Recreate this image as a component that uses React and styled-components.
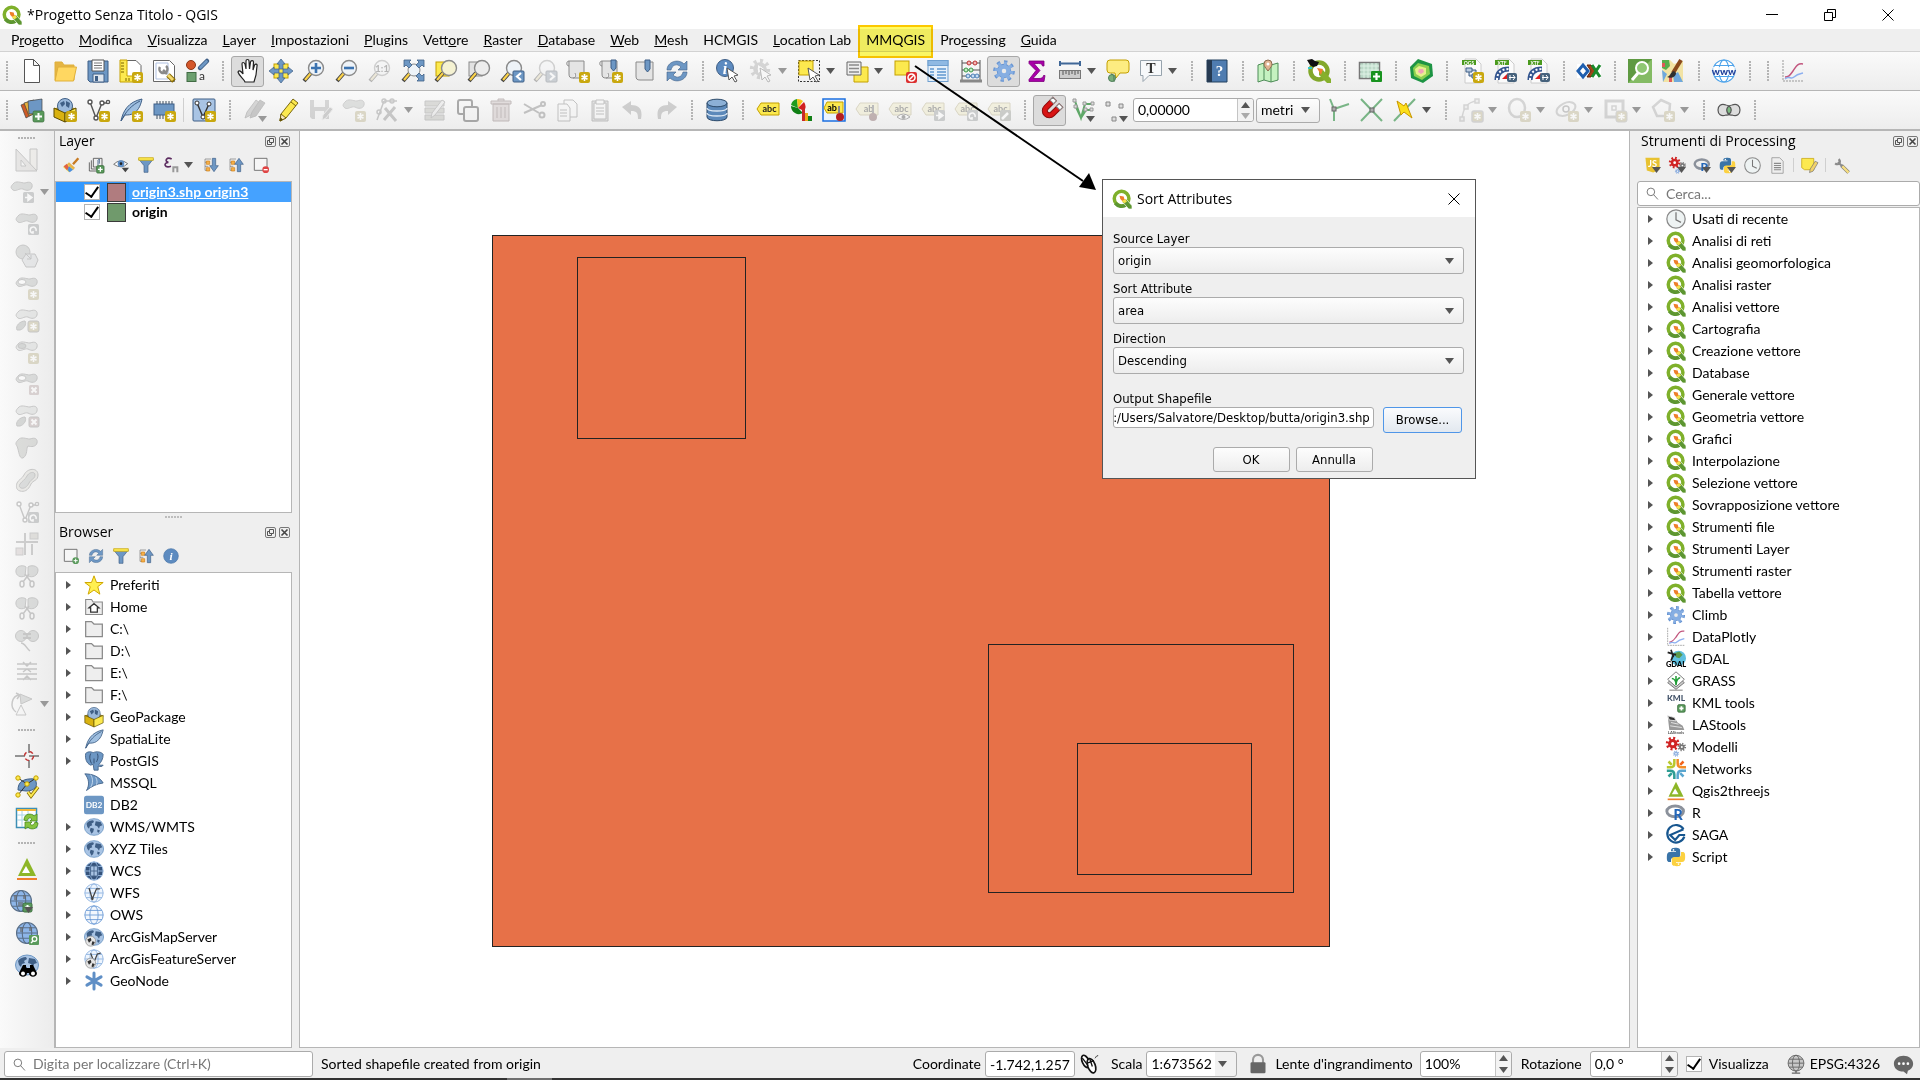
import React, { useEffect, useRef } from "react";
import styled, { createGlobalStyle, css } from "styled-components";

const uiFont = `Lato, "Noto Sans", sans-serif`;
const titleFont = `"Open Sans", "Noto Sans", sans-serif`;
const dialogFont = `"DejaVu Sans Condensed", "DejaVu Sans", sans-serif`;

const GlobalStyle = createGlobalStyle`
  * {
    box-sizing: border-box;
  }
  body {
    margin: 0;
    background: #efefef;
    color: #000;
    font: 14px/18px ${uiFont};
  }
  button, input, select {
    font: inherit;
    color: inherit;
  }
`;

/* ---------- icons (24 x 24 grid) ---------- */

const BLUE = "#6d97c4";
const NAVY = "#3f5f86";
const GREY = "#8a8a8a";
const YELLOW = "#fce94f";
const GOLD = "#c4a000";
const BLOB = "M3 4C6 0 11 3 15 3c5-2 8 0 7 4-1 4-6 4-9 2-4-1-7 3-10 1C0 8 1 6 3 4z";
const FEATHER = "M2 23C4 13 9 4 23 1c-1 5-3 11-8 14-3 2-6 2-9 2z";
const TAG = "M1 11l4-6h18v12H5z";

const Spark = () => (
  <g>
    <rect x="13" y="13" width="11" height="11" rx="2" fill="#c9a80f" />
    <path d="M18.500 15v7M15.500 16.700l6 3.600M21.500 16.700l-6 3.600" stroke="#fff" strokeWidth="1.600" />
  </g>
);
const Plus = ({ x = 13, y = 13, s = 11 }) => (
  <g>
    <rect x={x} y={y} width={s} height={s} rx="1.500" fill="#5a9a5c" stroke="#3c6f3e" />
    <path d={`M${x + s / 2} ${y + 2}v${s - 4}M${x + 2} ${y + s / 2}h${s - 4}`} stroke="#fff" strokeWidth="2" />
  </g>
);
const CrossBadge = () => (
  <g>
    <rect x="14" y="13" width="10" height="10" rx="1.500" fill="#d08a8a" />
    <path d="M16.500 15.500l5 5M21.500 15.500l-5 5" stroke="#fff" strokeWidth="2" />
  </g>
);
const ArrowBadge = () => (
  <g>
    <rect x="13" y="12" width="11" height="11" rx="1.500" fill="#7e8a90" />
    <path d="M15 17.500h5M18 14.500l4 3-4 3z" stroke="#fff" strokeWidth="1.500" fill="#fff" />
  </g>
);
const TurnBadge = () => (
  <g>
    <rect x="13" y="12" width="11" height="11" rx="1.500" fill="#7e8a90" />
    <path d="M21 19a3 3 0 1 0-3 2v-2" stroke="#fff" strokeWidth="1.600" fill="none" />
  </g>
);
const Lens = ({ fill = "#eef3f8", x = 14 }) => (
  <g>
    <path d="M9 14l-7 8" stroke="#444" strokeWidth="4" />
    <path d="M9 14l-6 7" stroke="#fcd34a" strokeWidth="2.200" />
    <circle cx={x} cy="9" r="7.500" fill={fill} stroke={GREY} strokeWidth="1.400" />
  </g>
);
const Cursor = ({ x = 11, y = 9 }) => (
  <path d={`M${x} ${y}l2 12 3-3 3 5 2-1-3-5 4-1z`} fill="#fff" stroke="#555" strokeWidth="1" />
);
const Gear = ({ cx = 12, cy = 12, r = 8, fill = "#7ba4dc", hole = "#eaeaea" }) => (
  <g>
    <circle cx={cx} cy={cy} r={r} fill="none" stroke={fill} strokeWidth={r * 0.55} strokeDasharray={`${r * 0.36} ${r * 0.42}`} />
    <circle cx={cx} cy={cy} r={r * 0.85} fill={fill} />
    <circle cx={cx} cy={cy} r={r * 0.3} fill={hole} />
  </g>
);
const Globe = ({ fill = "#a9c4e4", line = NAVY, r = 10.5, cx = 12, cy = 12 }) => (
  <g fill="none" stroke={line} strokeWidth="1.100">
    <circle cx={cx} cy={cy} r={r} fill={fill} />
    <ellipse cx={cx} cy={cy} rx={r * 0.45} ry={r} />
    <path d={`M${cx - r} ${cy}h${2 * r}M${cx - r * 0.87} ${cy - r / 2}h${r * 1.74}M${cx - r * 0.87} ${cy + r / 2}h${r * 1.74}`} />
  </g>
);
const Earth = () => (
  <g>
    <ellipse cx="12" cy="12" rx="11.500" ry="10" fill="#a9c4e4" stroke={BLUE} />
    <path d="M3 8c2-3 5-4 8-4l1 2-3 2 1 2-3 1-1 3-2-2zM8 13l4 1-1 4-2 2-2-4zM14 5l6 1 2 4-3 1-1 3-2-3-3-1zM16 15l3 1-1 3-2-1z" fill={NAVY} />
  </g>
);
const Vee = ({ color = "#555" }) => (
  <g fill="none" stroke={color} strokeWidth="1.400">
    <path d="M4 4l6 16 6-15h5" />
    <g fill="#fff">
      <circle cx="4" cy="4" r="2" />
      <circle cx="10" cy="20" r="2" />
      <circle cx="16" cy="5" r="2" />
      <circle cx="22" cy="4" r="1.600" />
    </g>
  </g>
);
const Scroll = () => <path d="M3 2h15v17H7c-3 0-4-1-4-4zM3 2c-3 0-3 5 0 5M7 19c3 0 3-3 2-5" fill="#e4e4e4" stroke={GREY} />;
const Label = ({ text = "abc" }) => (
  <g>
    <path d={TAG} fill={YELLOW} stroke={GOLD} />
    <text x="13.500" y="14" fontSize="9" fontWeight="700" textAnchor="middle" fill="#222">{text}</text>
  </g>
);
const Scissors = () => (
  <g fill="none" stroke="#777" strokeWidth="1.500">
    <path d="M10 10l6 8M14 10l-6 8" />
    <ellipse cx="7" cy="20" rx="2" ry="3" />
    <ellipse cx="17" cy="20" rx="2" ry="3" />
  </g>
);
const Doc = ({ tag, badge }) => (
  <g>
    <path d="M5 0h11l5 5v19H5z" fill="#fbfbfb" stroke="#ccc" />
    <rect x="2" y="1" width="14" height="5" fill="#4a9a1d" />
    <text x="9" y="5.500" fontSize="5" fontWeight="700" textAnchor="middle" fill="#fff">{tag}</text>
    {badge === "spark" ? (
      <g>
        <path d="M6 9h6v4H6zM12 15h6v4h-6zM9 13v4h3M12 11h4v4" fill="#b9cbe0" stroke={NAVY} />
        <Spark />
      </g>
    ) : (
      <g>
        <path d="M4 21c0-7 4-11 12-11" fill="none" stroke="#33558f" strokeWidth="5" />
        <path d="M4 21c0-7 4-11 12-11" fill="none" stroke="#fff" strokeWidth="2" strokeDasharray="2 2" />
        <path d="M9 20l6-6v6z" fill="#e02020" />
        <rect x="14" y="14" width="10" height="9" rx="2" fill="#46627c" />
        <path d="M16 18.500h6M20 16l2 2.500-2 2.500M17 16v5" stroke="#fff" fill="none" />
      </g>
    )}
  </g>
);

const ICONS = {
  qgis: (
    <g>
      <circle cx="11.500" cy="11.500" r="8.800" fill="#fff" stroke="#7fb02b" strokeWidth="4.200" />
      <path d="M4 17c3 4 9 5 13 2" stroke="#5d9631" strokeWidth="4.200" fill="none" />
      <path d="M13 13l4-1 7 8v4h-4l-7-8z" fill="#5d9631" stroke="#fff" strokeWidth=".8" />
      <path d="M12 12l4 0 2 3-3 2-3-2z" fill="#f5e04c" />
      <path d="M9 8l5 1 1 4-3 1-2-2z" fill="#ee7f2b" />
    </g>
  ),
  newFile: <path d="M4.500.5h9l6 6v17h-15zM13.500.5v6h6" fill="#fff" stroke="#555" />,
  open: (
    <g stroke="#e0b03a">
      <path d="M2 3h7l2 3h10v15H2z" fill="#e5b544" />
      <path d="M5 8h18.500l-3 14H2z" fill="#ffd761" />
    </g>
  ),
  save: (
    <g>
      <path d="M2 2h20v21H4l-2-2z" fill={BLUE} stroke={NAVY} />
      <path d="M6 1h12v11H6z" fill="#fff" stroke="#555" />
      <path d="M8 4h8M8 6.500h8M8 9h8" stroke="#777" />
      <path d="M7 15h11v8H7z" fill="#dfe6ee" stroke={NAVY} />
      <rect x="9" y="17" width="3" height="5" fill={NAVY} />
    </g>
  ),
  layout: (
    <g>
      <path d="M6 1.500h11l5 5v16H6z" fill="#fff" stroke="#666" />
      <path d="M1 1h7v16h12v6H1z" fill={YELLOW} stroke={GOLD} />
      <path d="M2 4h3M2 7h3M2 10h3M2 13h3M7 22v-3M10 22v-3" stroke="#7a6400" />
      <Spark />
    </g>
  ),
  layoutManager: (
    <g>
      <path d="M1.500 1.500h16l5 5v16h-21z" fill="#fff" stroke="#666" />
      <path d="M4 4h12v16H4z" fill="none" stroke="#aebfe0" />
      <path d="M16 16l6 6" stroke="#8a6d00" strokeWidth="5" />
      <path d="M16 16l5 5" stroke="#f3d86c" strokeWidth="3" />
      <path d="M15 15l-4-4M8 8a4 4 0 1 0 6-1" stroke={GREY} strokeWidth="2.500" fill="none" />
    </g>
  ),
  style: (
    <g>
      <circle cx="6" cy="6" r="4.500" fill="#d4572b" stroke="#8d3616" />
      <path d="M15 9l7-7" stroke={NAVY} strokeWidth="4.500" strokeLinecap="round" />
      <path d="M15.500 8.500l6-6" stroke={BLUE} strokeWidth="2.600" strokeLinecap="round" />
      <rect x="2" y="13.500" width="9" height="9" fill="#6b9f6e" stroke="#416b44" />
      <text x="14" y="21" fontSize="12" fill="#333">a</text>
    </g>
  ),
  hand: (
    <path d="M9 23c-1-3-6-6-7-10 1-2 3-1 5 2l-1-10c0-2 2-2 3 0l1 5V2c0-2 3-2 3 0l.5 8 1-7c.5-2 3-1.500 3 0l-.5 8 1.500-5c1-1.500 3-1 2.500 1l-1 9-2 7z" fill="#fff" stroke="#222" strokeWidth="1.200" />
  ),
  panSelection: (
    <g>
      <rect x="5" y="5" width="14" height="14" fill={YELLOW} stroke={GOLD} />
      <path d="M12 0l4 5h-2v5h-4V5H8zM12 24l4-5h-2v-5h-4v5H8zM0 12l5-4v2h5v4H5v2zM24 12l-5-4v2h-5v4h5v2z" fill={BLUE} stroke={NAVY} strokeWidth=".7" />
    </g>
  ),
  zoomIn: <g><Lens /><path d="M9 9h10M14 4v10" stroke="#3b73b0" strokeWidth="2.600" /></g>,
  zoomOut: <g><Lens /><path d="M9 9h10" stroke="#3b73b0" strokeWidth="2.600" /></g>,
  zoomNative: <g><Lens /><text x="14" y="13" fontSize="10" fontWeight="700" textAnchor="middle" fill="#444">1:1</text></g>,
  zoomFull: (
    <g>
      <path d="M9 14l-7 8" stroke="#444" strokeWidth="4" />
      <path d="M9 14l-6 7" stroke="#fcd34a" strokeWidth="2.200" />
      <circle cx="13" cy="11" r="6" fill="#eef3f8" stroke={GREY} />
      <path d="M3 1h7L8 3l3 3-3 3-3-3-2 2zM23 1h-7l2 2-3 3 3 3 3-3 2 2zM23 22h-7l2-2-3-3 3-3 3 3 2-2z" fill={BLUE} stroke={NAVY} strokeWidth=".8" />
    </g>
  ),
  zoomSelection: <g><rect x="2" y="3" width="13" height="14" fill={YELLOW} stroke={GOLD} /><Lens fill="#f5f2d2" x={15} /></g>,
  zoomLayer: <g><rect x="2" y="3" width="13" height="14" fill="#e2e2e2" stroke={GREY} /><Lens fill="#ececec" x={15} /></g>,
  zoomLast: <g><Lens /><rect x="13" y="12" width="11" height="11" rx="1" fill={BLUE} stroke={NAVY} /><path d="M21 14l-4 3.500 4 3.500" stroke="#fff" strokeWidth="2.200" fill="none" /></g>,
  zoomNext: <g><Lens /><rect x="13" y="12" width="11" height="11" rx="1" fill={BLUE} stroke={NAVY} /><path d="M17 14l4 3.500-4 3.500" stroke="#fff" strokeWidth="2.200" fill="none" /></g>,
  mapView: <g><Scroll /><Spark /></g>,
  bookmarkNew: <g><Scroll /><path d="M12 1h5v8l-2.500 3-2.500-3z" fill={BLUE} stroke={NAVY} /><Spark /></g>,
  bookmarks: <g><path d="M4 3h17v18H8c-3 0-4-1-4-4z" fill="#e4e4e4" stroke={GREY} /><path d="M13 1h5v9l-2.500 3-2.500-3z" fill={BLUE} stroke={NAVY} /></g>,
  refresh: (
    <g fill={BLUE} stroke={NAVY} strokeWidth=".6">
      <path d="M2 11C2 3 13-1 19 5l3-3v9h-9l3-3c-4-4-9-2-10 3z" />
      <path d="M22 13c0 8-11 12-17 6l-3 3v-9h9l-3 3c4 4 9 2 10-3z" />
    </g>
  ),
  identify: <g><circle cx="9" cy="9" r="8.500" fill="#5d8bc0" stroke={NAVY} /><text x="9" y="15" fontSize="16" fontStyle="italic" fontWeight="700" textAnchor="middle" fill="#fff" fontFamily="Liberation Serif">i</text><Cursor /></g>,
  action: <g><Gear cx={11} cy={10} r={8} fill="#999" /><path d="M9 6l6 4-6 4z" fill="#fff" /><Cursor /></g>,
  select: <g><rect x="1.500" y="1.500" width="21" height="21" fill="none" stroke="#333" strokeDasharray="2 1.500" /><rect x="2" y="2" width="14" height="14" fill={YELLOW} stroke={GOLD} /><Cursor /></g>,
  selectForm: <g><path d="M9 8h14v15H9z" fill={YELLOW} stroke={GOLD} /><path d="M2 3h14v13H2z" fill="#eee" stroke="#666" /><path d="M4 6h10M4 9.500h10M4 13h10" stroke={GREY} strokeWidth="1.500" /></g>,
  deselect: <g><rect x="2" y="2" width="14" height="14" fill={YELLOW} stroke={GOLD} /><rect x="13" y="13" width="11" height="11" rx="2" fill="#dc2f2f" /><circle cx="18.500" cy="18.500" r="3.500" fill="none" stroke="#fff" strokeWidth="1.500" /><path d="M16 21l5-5" stroke="#fff" strokeWidth="1.500" /></g>,
  table: <g><rect x="2" y="1.500" width="20" height="21" fill="#e6f0fa" stroke="#6f9fcf" /><rect x="2" y="1.500" width="20" height="5" fill="#8fb9e3" stroke="#6f9fcf" /><path d="M4 10h4M4 13h4M4 16h4M4 19h4M11 10h9M11 13h9M11 16h9M11 19h9" stroke="#5f96d0" strokeWidth="1.500" /></g>,
  abacus: (
    <g>
      <path d="M3 1v20M21 1v20M3 4h18M3 11h18M3 17h18" stroke="#555" fill="none" />
      <path d="M1 22h22" stroke="#888" strokeWidth="3" />
      <g stroke="#b33" fill="#f6b6b6"><circle cx="10" cy="4" r="2" /><circle cx="16" cy="4" r="2" /></g>
      <g stroke="#3c9a4a" fill="#c3ecc7"><circle cx="7" cy="11" r="2" /><circle cx="12" cy="11" r="2" /></g>
      <g stroke="#4b7fb6" fill="#c7ddf5"><circle cx="9" cy="17" r="2" /><circle cx="14" cy="17" r="2" /><circle cx="18" cy="17" r="2" /></g>
    </g>
  ),
  gear: <g><Gear r={8.5} fill="#6794d2" /><Gear r={7.5} fill="#86aee2" /></g>,
  sigma: <path d="M4 2h15v5h-1.500c-.5-2-1.500-2.500-4-2.500H9l6 7-7 8h6c3 0 4-1 4.500-3H20l-1 6H4v-2l7-9-7-7z" fill="#a800a8" stroke="#7c007c" strokeWidth=".8" />,
  ruler: <g><path d="M2 4.500h20M2 2v5M22 2v5" stroke="#3f6797" strokeWidth="2" /><rect x="1.500" y="11.500" width="21" height="8" fill="#ccc" stroke="#777" /><path d="M5 12v4M8 12v3M11 12v4M14 12v3M17 12v4M20 12v3" stroke="#555" /></g>,
  mapTip: <g><path d="M4 1h16q3 0 3 3v7q0 3-3 3h-6l-4 5-1-5H4q-3 0-3-3V4q0-3 3-3z" fill="#fdec81" stroke={GOLD} /><circle cx="6" cy="19" r="3.500" fill="#7aaf7c" stroke="#50805a" /><path d="M5 15c3 0 3 4 3 8" stroke="#50805a" fill="none" /></g>,
  text: <g><path d="M1.500 1.500h21v15H10l-6 6v-6H1.500z" fill="#f7f9fb" stroke="#97a3ad" /><text x="12" y="14" fontSize="14" fontWeight="700" textAnchor="middle" fill="#333" fontFamily="Liberation Serif">T</text></g>,
  help: <g><path d="M2 1h20v22H2z" fill="#4f7cb0" stroke="#22405f" /><path d="M2 1h5v22H2z" fill="#263a52" /><text x="14.500" y="17" fontSize="15" fontWeight="700" textAnchor="middle" fill="#fff" fontFamily="Liberation Serif">?</text></g>,
  mapPin: <g><path d="M2 6l6-2 7 2 7-2v17l-7 2-7-2-6 2z" fill="#c5f2c0" stroke="#4d8b57" /><path d="M8 4v17M15 6v17" stroke="#4d8b57" /><path d="M12 12c-3-4-4-5-4-7a4 4 0 1 1 8 0c0 2-1 3-4 7z" fill="#e0b391" stroke="#8c6a50" /><circle cx="12" cy="5" r="1.500" fill="#fff" /></g>,
  qPlugin: <g><circle cx="12" cy="12" r="8.500" fill="#fff" stroke="#82a82b" strokeWidth="4.500" /><path d="M12 12l4-1 8 9v4h-4l-8-8z" fill="#86b02c" /><path d="M10 9l6 1-2 6z" fill="#f08030" /><path d="M0 1l5-1 3 2 4 1-2 4-4 1-3-2z" fill="#111" /><path d="M1 8h4v2H1z" fill="#35c6c6" /></g>,
  gridPlus: <g><rect x="1.500" y="3.500" width="20" height="16" fill="#bcd9c8" stroke="#777" strokeWidth="1.500" /><path d="M2 7h19M2 11h19M2 15h19M6 4v15M10 4v15M14 4v15M18 4v15" stroke="#dff2e6" /><rect x="13" y="12" width="11" height="11" rx="1" fill="#18931f" /><path d="M18.500 14v7M15 17.500h7" stroke="#fff" strokeWidth="2.200" /></g>,
  pentagon: <g><path d="M9 0l14 5 1 12-10 7-12-5L1 8z" fill="#1d9444" /><path d="M9 4l11 3 1 8-8 6-8-4-1-8z" fill="#8bd04f" /><path d="M10 7l7 2v6l-5 3-5-3-1-5z" fill="#e6f08d" /><path d="M10 10l4 0 1 3-3 2-3-2z" fill="#f0a4b8" /></g>,
  qgsDoc: <Doc tag="QGS" badge="spark" />,
  xtfDoc: <Doc tag="XTF" />,
  ox: <g><rect y="5" width="24" height="14" fill="#fff" /><path d="M1 12l5-6 5 6-5 6z" fill="none" stroke="#1f5faf" strokeWidth="3" /><path d="M10 6l4 6-4 6 4 0 4-6-4-6z" fill="#a04418" stroke="#5c2208" /><path d="M15 6l8 12M23 6l-8 12" stroke="#1c8a2c" strokeWidth="3" /></g>,
  searchGreen: <g><rect width="24" height="24" fill="#5f9a42" /><path d="M24 0v24H0z" fill="#84bb64" /><circle cx="14" cy="9" r="6" fill="#8fc774" stroke="#fff" strokeWidth="2" /><path d="M10 14l-6 7" stroke="#fff" strokeWidth="3" /></g>,
  brushMap: <g><path d="M1 1h8l4 4 9-3v21H2z" fill="#f2e3a4" /><path d="M1 1h7l1 6-4 4-4-2z" fill="#5aae4c" /><path d="M1 11l5 4-4 8zM12 16l5-3 5 10H13z" fill="#6fa8dc" /><path d="M1 4h3v4H1zM8 18h3v5H8z" fill="#e05858" /><path d="M20 1L12 14" stroke="#8a4a1c" strokeWidth="4" /><path d="M13 12c-4 1-3 5-7 6 4 2 9 0 9-4z" fill="#2f2f2f" /></g>,
  www: <g><Globe fill="#fff" line="#4ea3ea" r={11} /><rect x="1" y="8" width="22" height="8" fill="#fff" opacity=".8" /><text x="12" y="15.500" fontSize="10" fontWeight="900" textAnchor="middle" fill="#1f3f9a">www</text></g>,
  plot: <g fill="none"><path d="M2 1v21h21" stroke="#999" strokeDasharray="2 1" /><path d="M4 18c4 0 5-2 8-6s4-8 10-7" stroke="#c2567e" strokeWidth="1.500" /><path d="M4 20c4-4 6 1 9-2s4-3 9-4" stroke="#8db0f0" strokeWidth="1.500" /></g>,

  dataSource: <g stroke="#444" strokeWidth=".7"><path d="M1 7l10-4 4 12-9 5z" fill="#cf5a25" /><path d="M4 5l10-3 4 12-9 4z" fill="#e9b23c" /><path d="M8 3l14-2v14l-13 1z" fill={BLUE} /><Plus /></g>,
  geopackage: <g stroke="#5c4b00" strokeWidth=".8"><path d="M1 11l11-5 11 5-11 6z" fill="#b89410" /><circle cx="12" cy="8" r="7.500" fill="#9ab8da" stroke={NAVY} /><path d="M7 5l4-2 1 3-3 3zM13 3l4 2-1 5-3-2z" fill={NAVY} stroke="none" /><path d="M1 10l11 5v9L1 19z" fill="#d9b210" /><path d="M23 10l-11 5v9l11-5z" fill={YELLOW} /></g>,
  geopackageNew: <g><path d="M1 11l11-5 11 5-11 6z" fill="#b89410" /><circle cx="12" cy="8" r="7.500" fill="#9ab8da" stroke={NAVY} /><path d="M7 5l4-2 1 3-3 3zM13 3l4 2-1 5-3-2z" fill={NAVY} /><path d="M1 10l11 5v9L1 19z" fill="#d9b210" stroke="#5c4b00" /><path d="M23 10l-11 5v9l11-5z" fill={YELLOW} stroke="#5c4b00" /><Spark /></g>,
  shapeNew: <g><Vee /><Spark /></g>,
  feather: <g><path d={FEATHER} fill="#9fbfe0" stroke={NAVY} /><path d="M2 23C7 13 13 7 21 3" stroke={NAVY} fill="none" /></g>,
  featherNew: <g><path d={FEATHER} fill="#9fbfe0" stroke={NAVY} /><path d="M2 23C7 13 13 7 21 3" stroke={NAVY} fill="none" /><Spark /></g>,
  memory: <g><path d="M5 3v18M8 3v18M11 3v18M14 3v18M17 3v18M20 3v18" stroke="#3c4c5c" /><rect x="2" y="6" width="20" height="11" fill={BLUE} stroke={NAVY} /><Spark /></g>,
  virtual: <g><rect x="1" y="1" width="22" height="22" rx="1" fill="#a9c4e4" stroke={NAVY} /><path d="M5 5l6 14 6-13" fill="none" stroke="#333" strokeWidth="1.400" /><g fill="#fff" stroke="#333"><circle cx="5" cy="5" r="2" /><circle cx="17" cy="6" r="2" /><circle cx="11" cy="19" r="2" /></g><Spark /></g>,
  edits: <g stroke="#555" strokeWidth=".8"><path d="M2 20l2-6L13 2l4 3L8 17z" fill="#999" /><path d="M7 20l2-6 8-12 5 3-9 13z" fill="#777" /></g>,
  pencil: <g stroke="#6b5800" strokeWidth=".9"><path d="M4 23l1-7L17 1l5 4L10 20z" fill={YELLOW} /><path d="M4 23l1-7 5 4z" fill="#f7e6c0" /><path d="M15 4l5 4" /><path d="M4 23l.5-3 2 1.500z" fill="#333" /></g>,
  saveEdits: <g><path d="M1 2h19v19H3l-2-2z" fill="#999" /><path d="M5 2h11v7H5zM6 13h9v8H6z" fill="#eee" /><path d="M13 22l1-5 7-8 3 2-7 9z" fill="#888" stroke="#ddd" /></g>,
  addFeature: <g><path d={BLOB} fill="#aab6ae" stroke="#888" /><Spark /></g>,
  vertexTool: <g fill="none" stroke="#777" strokeWidth="1.500"><path d="M2 22L9 3M9 3h13" /><circle cx="9" cy="3" r="2" /><circle cx="4" cy="14" r="2" /><circle cx="17" cy="3" r="2" /><path d="M10 10l11 13M20 9L9 22" strokeWidth="3" /></g>,
  multiEdit: <g><path d="M2 3h19v5H2zM2 10h19v5H2zM2 17h19v5H2z" fill="#a9ab92" stroke="#777" /><path d="M8 20l1-5L19 2l3 2-10 13z" fill="#ddd" stroke="#777" /></g>,
  copyFeature: <g fill="#f2f2f2" stroke="#222" strokeWidth="2"><rect x="2" y="2" width="14" height="14" rx="2" /><rect x="8" y="9" width="14" height="14" rx="2" /></g>,
  trash: <g fill="#d6a8a8" stroke="#8a4f4f"><path d="M4 6h16v17H4zM2 3h20v3H2zM9 3V1h6v2" /><path d="M8 9v11M12 9v11M16 9v11" /></g>,
  cut: <g fill="none" stroke="#666" strokeWidth="2"><path d="M2 6l15 9M2 15L20 7" /><circle cx="20" cy="17" r="2.500" /><circle cx="21" cy="6" r="2" /></g>,
  copy: <g fill="#f4f4f4" stroke="#666"><path d="M9 2h9l4 4v13H9z" /><path d="M3 6h9l3 4v13H3z" /><path d="M5 12h7M5 15h7M5 18h7" /></g>,
  paste: <g fill="#f4f4f4" stroke="#666"><path d="M4 3h16v20H4z" fill="#bbb" /><path d="M6 5h12v16H6z" /><path d="M8 2h8v4H8zM8 10h8M8 13h8M8 16h8" /></g>,
  undo: <path d="M1 9l9-6v4c8 0 12 4 10 14h-3c0-6-1-8-7-8v4z" fill="#888" />,
  redo: <path d="M23 9l-9-6v4C6 7 2 11 4 21h3c0-6 1-8 7-8v4z" fill="#888" />,
  database: <g fill="#5c89ba" stroke="#2c4a6a"><path d="M2 5v14c0 5 20 5 20 0V5z" /><path d="M2 10c0 4 20 4 20 0M2 15c0 4 20 4 20 0" fill="none" stroke="#dbe7f3" strokeWidth="1.300" /><ellipse cx="12" cy="5" rx="10" ry="3.800" fill="#8cb0d6" /></g>,
  label: <Label />,
  diagram: <g><path d="M9 10L2 7a8 8 0 0 1 6-6z" fill="#1f9c1f" /><path d="M9 10L8 1a8 8 0 0 1 6 2z" fill="#f5c518" /><path d="M9 10l6-6a8 8 0 0 1 0 9z" fill="#d12020" /><path d="M9 10l5 5a8 8 0 0 1-12-7z" fill="#0f7f14" /><path d="M13 11h3v12h-3z" fill="#c82a2a" /><path d="M16 15h3v8h-3z" fill="#f0a818" /><path d="M19 18h4v5h-4z" fill="#127f16" /></g>,
  labelPin: <g><rect x="1" y="1" width="22" height="22" fill="#eaf3ff" stroke="#1b6fe0" strokeWidth="1.500" /><path d="M2 10l3-6h16v11H5z" fill={YELLOW} stroke={GOLD} /><text x="10" y="13" fontSize="9" fontWeight="700" textAnchor="middle">ab</text><path d="M17 8v7" stroke="#888" strokeWidth="2" /><circle cx="18" cy="19" r="4" fill="#b51f1f" /></g>,
  labelHold: <g><Label text="ab" /><path d="M18 7v9" stroke="#555" strokeWidth="2" /><circle cx="18" cy="19" r="4" fill="#b0282c" /></g>,
  labelShow: <g><Label /><path d="M9 19q6-6 13 0-7 5-13 0z" fill="#fff" stroke="#333" /><circle cx="15.500" cy="19" r="2" fill="#333" /></g>,
  labelMove: <g><Label /><ArrowBadge /></g>,
  labelTurn: <g><Label /><TurnBadge /></g>,
  labelEdit: <g><Label /><rect x="13" y="12" width="11" height="11" rx="1.500" fill="#7e8a6e" /><path d="M15 21l6-6" stroke="#fff" strokeWidth="2.500" /></g>,
  magnet: <g transform="rotate(45 12 12)"><path d="M5 1v12a7 7 0 0 0 14 0V1h-5v12a2 2 0 0 1-4 0V1z" fill="#d81414" stroke="#8c0b0b" /><path d="M5 1h5v4H5zM14 1h5v4h-5z" fill="#fff" stroke="#888" /></g>,
  snapAll: <g stroke="#5fa868" fill="none"><path d="M4 3l6 17 4-14h8M5 9l5 11 5-8h6" strokeWidth="2" /><g fill="#ddd" stroke="#999"><path d="M2 1h3v3H2zM3 7h3v3H3zM12 4h3v3h-3zM20 4h3v3h-3zM13 10h3v3h-3zM19 10h3v3h-3z" /></g></g>,
  snapVertex: <g fill="#ddd" stroke="#888"><path d="M2 4h4v4H2zM15 6h4v4h-4zM8 19h4v4H8z" /></g>,
  topological: <g fill="none"><path d="M3 1l4 10v12M7 11l15-5" stroke="#79b586" strokeWidth="2" /><rect x="5" y="9" width="4" height="4" fill="#aaa" stroke="#666" /></g>,
  intersection: <g fill="none"><path d="M1 1l21 22M22 1L1 23" stroke="#79b586" strokeWidth="2" /><rect x="10" y="10" width="4" height="4" fill="#aaa" stroke="#666" /></g>,
  tracing: <g fill="none"><path d="M22 1L1 23" stroke="#79b586" strokeWidth="2" /><path d="M4 3l7 5 2-3 6 15-8-6-3 3z" fill="#fcdf1a" stroke="#c89600" /></g>,
  curve: <g fill="none" stroke="#999" strokeWidth="1.500"><path d="M3 21C4 10 8 4 18 3" /><path d="M1 19h4v4H1zM16 1h4v4h-4zM5 7h4v4H5z" fill="#ddd" /><Spark /></g>,
  circle: <g><ellipse cx="10" cy="10" rx="8" ry="9" fill="none" stroke="#999" strokeWidth="2.500" /><Spark /></g>,
  ellipse: <g><ellipse cx="11" cy="11" rx="10" ry="6" transform="rotate(-25 11 11)" fill="none" stroke="#999" strokeWidth="2" /><circle cx="11" cy="11" r="3" fill="none" stroke="#777" strokeWidth="1.500" /><Spark /></g>,
  rectangle: <g fill="none" stroke="#999"><rect x="3" y="3" width="17" height="16" strokeWidth="3" /><rect x="9" y="8" width="4" height="4" strokeWidth="1.500" /><Spark /></g>,
  polygon: <g><path d="M10 2l9 4-1 12H6L2 9z" fill="none" stroke="#999" strokeWidth="2.500" /><Spark /></g>,
  overlap: <g stroke="#555" strokeWidth="1.200"><path d="M9 7C4 5 1 8 1 12s3 7 8 5c6 1 7-9 0-10z" fill="#ddd" /><path d="M15 7c5-2 8 1 8 5s-3 7-8 5c-6 1-7-9 0-10z" fill="#ddd" /><path d="M12 8c3 2 3 6 0 8-3-2-3-6 0-8z" fill="#7dbb82" /></g>,

  setSquare: <g fill="#cfc8c2" stroke="#777"><path d="M15 1h7v21h-7z" fill="#e7e2c8" /><path d="M1 1l21 22H1z" /><path d="M6 12l5 6H6z" fill="#f5f5f5" /></g>,
  blobMove: <g><path d={BLOB} fill="#a5b2aa" stroke="#777" /><ArrowBadge /></g>,
  blobTurn: <g><path d={BLOB} fill="#a5b2aa" stroke="#777" /><TurnBadge /></g>,
  simplify: <g stroke="#777"><circle cx="8" cy="8" r="7" fill="#a5b2aa" /><path d="M11 10h9l3 6-3 7h-9l-4-7z" fill="#c4ced8" /><path d="M10 9l6 6M16 11v4h-4" fill="none" /></g>,
  ringAdd: <g><path d={BLOB} fill="#a5b2aa" stroke="#777" /><ellipse cx="7" cy="6" rx="4" ry="2.500" fill="#fff" stroke="#777" /><Spark /></g>,
  partAdd: <g stroke="#777"><path d={BLOB} fill="#c5cec8" /><path d="M2 22c-2-4 3-9 8-9 2 3-1 8-5 9z" fill="#93a398" /><Spark /></g>,
  ringFill: <g><path d={BLOB} fill="#c5cec8" stroke="#777" /><ellipse cx="7" cy="6" rx="4" ry="2.500" fill="#93a398" stroke="#777" /><Spark /></g>,
  ringDelete: <g><path d={BLOB} fill="#a5b2aa" stroke="#777" /><ellipse cx="7" cy="6" rx="4" ry="2.500" fill="#fff" stroke="#777" /><CrossBadge /></g>,
  partDelete: <g stroke="#777"><path d={BLOB} fill="#c5cec8" /><path d="M2 22c-2-4 3-9 8-9 2 3-1 8-5 9z" fill="#93a398" /><CrossBadge /></g>,
  reshape: <path d="M3 4C6 0 11 3 15 3c5-2 8 0 7 4-1 4-6 4-9 3-2 2 0 9-5 12-4 1-4-7-6-12C0 8 1 6 3 4z" fill="#aab0a0" stroke="#777" />,
  offset: <g fill="#a5b2aa" stroke="#777"><path d="M2 15c2-4 5-4 7-8 3-7 14-8 14 0 0 6-5 5-7 9-3 7-7 8-11 7-4-1-4-5-3-8z" fill="#d8d4bb" /><path d="M5 16c2-3 5-4 7-8 2-4 8-5 8-1s-4 4-6 8-5 6-8 5c-2-1-2-2-1-4z" /></g>,
  offsetPoint: <g><Vee color="#777" /><TurnBadge /></g>,
  trim: <g stroke="#888"><path d="M10 1v22M1 10h22M17 12v11" strokeWidth="2" fill="none" /><rect x="15" y="1" width="8" height="6" fill="#c0b9a0" /><rect x="1" y="16" width="7" height="7" fill="#dcb0b0" /></g>,
  splitFeature: <g><path d="M10 12C6 14 0 12 1 6c1-5 8-5 10-3zM13 12c4 2 10 0 10-6 0-5-8-5-10-3z" fill="#a5b2aa" stroke="#777" /><Scissors /></g>,
  merge: <g stroke="#777" fill="#a5b2aa"><circle cx="6" cy="8" r="5.500" /><circle cx="18" cy="8" r="5.500" /><path d="M8 6h8M8 10h8" strokeWidth="2" /><path d="M6 15c4 0 5 5 9 8" fill="none" strokeWidth="1.500" /></g>,
  mergeAttributes: <path d="M2 4h20M2 9h20M2 14h20M2 19h20M8 2l4 4 4-4M8 12l4-3 4 3M8 20l4-4 4 4" fill="none" stroke="#777" strokeWidth="1.500" />,
  rotateSymbol: <g fill="none" stroke="#777"><path d="M6 20C-1 15 2 4 9 3M6 1l4 2-3 4" strokeWidth="1.500" /><path d="M10 2l12 5-11 5z" fill="#a5b2aa" /><path d="M11 13l5 10H6z" /></g>,
  crosshair: <g fill="none"><path d="M0 12h10M14 12h10M14 0v9M14 16v8" stroke="#333" /><circle cx="14" cy="12" r="4.500" stroke="#c03030" strokeWidth="1.500" strokeDasharray="4 3" /></g>,
  topology: <g><path d="M3 15C3 7 8 3 20 4c4 8-1 12-9 12z" fill={BLUE} stroke={NAVY} /><path d="M3 20L12 9l9-6M3 3l9 6" stroke="#333" fill="none" /><g fill={YELLOW} stroke={GOLD}><circle cx="3" cy="3" r="2.200" /><circle cx="21" cy="3" r="2.200" /><circle cx="12" cy="9" r="2.200" /><circle cx="3" cy="20" r="2.200" /></g><path d="M13 17l3 4 7-9" stroke="#806800" strokeWidth="3.500" fill="none" /><path d="M13 17l3 4 7-9" stroke={YELLOW} strokeWidth="2" fill="none" /></g>,
  tableRefresh: <g><rect x="1.500" y="2.500" width="20" height="19" fill="#fff" stroke="#3d8fb5" strokeWidth="1.500" /><path d="M2 4h19" stroke="#f5b83d" strokeWidth="2" /><path d="M2 9h19M2 14h19M7 5v16M13 5v16" stroke="#a9d4e6" /><path d="M9 14c0-7 8-7 10-4l3-2v7h-7l2-2c-2-2-4-1-5 2z" fill="#86c440" stroke="#4c8a1c" strokeWidth=".8" /><path d="M23 17c0 7-8 7-10 4l-3 2v-7h7l-2 2c2 2 4 1 5-2z" fill="#86c440" stroke="#4c8a1c" strokeWidth=".8" /></g>,
  threejs: <g><path d="M12 1l9 18H3z" fill="#8db627" /><path d="M11 9l4 7H7z" fill="#fff" /><path d="M2 22h20" stroke="#ee7f2b" strokeWidth="2" /></g>,
  globeAdd: <g><Globe fill="#8db5e8" line="#5a6f88" /><path d="M5 6h3v5H5zM14 6h3v4h-3zM9 13h5v4H9z" fill="#666" opacity=".6" /><Plus x={14} y={14} s={9} /></g>,
  globeSearch: <g><Globe fill="#8db5e8" line="#5a6f88" /><path d="M5 6h3v5H5zM14 6h3v4h-3z" fill="#666" opacity=".6" /><rect x="14" y="14" width="10" height="10" rx="1" fill="#5a9a5c" /><circle cx="19.500" cy="18" r="2.300" fill="none" stroke="#fff" strokeWidth="1.300" /><path d="M18 20l-2 2" stroke="#fff" strokeWidth="1.500" /></g>,
  globeFind: <g><Earth /><path d="M4 20l4-8h3v3h4v-3h3l4 8c0 5-8 5-8 0h-2c0 5-8 5-8 0z" fill="#000" /><circle cx="8" cy="20.500" r="2" fill="#fff" /><circle cx="18" cy="20.500" r="2" fill="#fff" /></g>,

  brush: <g><path d="M23 2l-8 9" stroke="#c77a22" strokeWidth="3.500" /><path d="M9 8l9 8-3 4-10-8z" fill="#e8b24c" /><path d="M6 10l9 8-6 5-9-8z" fill="#f0d84c" /><path d="M1 14l5-4 3 6-3 4z" fill="#e0604a" /><path d="M9 14l6 5-5 4-3-3z" fill="#4a8fe0" /></g>,
  addGroup: <g fill="none" stroke="#555" strokeWidth="1.300"><path d="M2 8v13h10M5 5v13h10M8 2h13v13M8 2v13h6" /><path d="M15 12V5l2-2v7" stroke={NAVY} /><Plus /></g>,
  eye: <g><path d="M1 11Q11 1 22 10 13 19 1 11z" fill="#fff" stroke="#777" strokeWidth="1.500" /><circle cx="12" cy="10" r="5" fill="#5f8fc6" /><circle cx="12" cy="10" r="2" fill="#222" /><path d="M13 16h11l-5.500 7z" fill="#444" /></g>,
  filter: <g><path d="M1 3h22l-8 10v10h-6V13z" fill={BLUE} stroke={NAVY} /><path d="M1 1h22v4H1z" fill={YELLOW} stroke={GOLD} /></g>,
  epsilon: <g><path d="M13 3C6-1 1 6 8 8c-8 1-6 9 4 6" fill="none" stroke="#5c2c60" strokeWidth="2.400" /><path d="M14 23v-9h9v9h-3v-6h-3v6z" fill="#999" /></g>,
  expand: <g><path d="M3 3v17h4M3 8h4M3 3h9M3 14h5" stroke="#777" fill="none" /><path d="M5 6h5v5H5zM5 16h5v5H5z" fill="#f5b04a" stroke="#d07d10" /><path d="M14 2h5v11h4l-6.500 9L10 13h4z" fill={BLUE} stroke={NAVY} /></g>,
  collapse: <g><path d="M3 3v17h4M3 8h4M3 3h9M3 14h5" stroke="#777" fill="none" /><path d="M5 6h5v5H5zM5 16h5v5H5z" fill="#f5b04a" stroke="#d07d10" /><path d="M14 22h5V11h4l-6.500-9L10 11h4z" fill={BLUE} stroke={NAVY} /></g>,
  removeLayer: <g><path d="M2 2h19v18H2z" fill="#f6f6f6" stroke="#777" strokeWidth="1.500" /><circle cx="19" cy="19" r="5" fill="#e04545" /><path d="M16 19h6" stroke="#fff" strokeWidth="2" /></g>,
  addLayer: <g><path d="M2 2h19v18H2z" fill="#f6f6f6" stroke="#777" strokeWidth="1.500" /><circle cx="19" cy="19" r="5" fill="#5a9a5c" /><path d="M16 19h6M19 16v6" stroke="#fff" strokeWidth="1.500" /></g>,
  info: <g><circle cx="12" cy="12" r="11" fill="#5d8bc0" stroke="#4a76a8" /><text x="12" y="18" fontSize="17" fontStyle="italic" fontWeight="700" textAnchor="middle" fill="#fff" fontFamily="Liberation Serif">i</text></g>,

  star: <path d="M12 1l3 8h8l-6.500 5L19 23l-7-5-7 5 2.500-9L1 9h8z" fill="#fff04f" stroke="#d1a800" strokeWidth="1.200" />,
  home: <g fill="#eee" stroke={GREY} strokeWidth="1.300"><path d="M2 3h7l2 3h11v15H2z" /><path d="M6 13l6-5 6 5h-2v5H8v-5z" fill="#fff" stroke="#333" strokeWidth="1.500" /></g>,
  folder: <path d="M2 3h7l3 3h10v15H2z" fill="#eee" stroke={GREY} strokeWidth="1.500" />,
  elephant: <g fill={BLUE} stroke={NAVY}><path d="M2 3c3-3 7-2 9-1 4-2 10-1 12 2 0 5-2 9-5 12l1 1h4c-1 2-4 2-6 1v5h-5l-1-7-3 1C3 15 1 9 2 3z" /><path d="M8 3c-2 4-1 8 1 12M16 3c2 4 0 8-1 10M12 9v6" fill="none" stroke="#2b4668" /></g>,
  sail: <g fill={BLUE} stroke={NAVY}><path d="M1 1c10 0 18 4 22 11-8 1-14 4-20 9C7 14 6 7 1 1z" /><path d="M8 2c3 5 3 10 0 15M14 5c2 4 2 6 1 9" fill="none" stroke="#cfe0f2" /></g>,
  db2: <g><rect x="0" y="1" width="24" height="22" rx="3" fill={BLUE} /><text x="12" y="15.500" fontSize="10" fontWeight="700" textAnchor="middle" fill="#fff">DB2</text></g>,
  earth: <Earth />,
  wcs: <g><Globe fill="#35527a" line="#9fbfe6" r={11} /><rect x="8" y="6" width="8" height="12" fill="#a9c4e4" stroke={NAVY} /><path d="M12 6v12M8 12h8" stroke={NAVY} /></g>,
  wfs: <g><Globe fill="#eef5fd" line="#8fb3e0" r={11} /><path d="M6 6l4 13 5-12h4" fill="none" stroke="#444" strokeWidth="1.500" /><circle cx="10" cy="19" r="1.500" fill="#444" /></g>,
  ows: <Globe fill="#f2f7fd" line="#6f9cd6" r={11} />,
  arcMap: <g><Earth /><circle cx="8" cy="17" r="6" fill="#e6e6e6" stroke="#999" /><path d="M4 15l4-2 1 3-3 3zM10 17l3 1-2 4-2-1z" fill="#333" /></g>,
  arcFeature: <g><Globe fill="#eef5fd" line="#8fb3e0" r={11} /><path d="M8 5l4 11 4-10 4-1" fill="none" stroke="#444" strokeWidth="1.500" /><circle cx="8" cy="17" r="6" fill="#e6e6e6" stroke="#999" /><path d="M4 15l4-2 1 3-3 3zM10 17l3 1-2 4-2-1z" fill="#333" /></g>,
  geonode: <g stroke="#5f8fc6" strokeWidth="3.600" strokeLinecap="round"><path d="M12 2.500v19M3.500 7l17 10M20.500 7L3.500 17" /></g>,

  js: <g><path d="M2 1h20v17l-9 4-9-3z" fill="#e8c230" /><text x="12" y="14" fontSize="13" fontWeight="700" textAnchor="middle" fill="#fff">JS</text></g>,
  models: <g><Gear cx={8} cy={8} r={6.5} fill="#d02424" hole="#fff" /><Gear cx={19} cy={12} r={4} fill="#777" hole="#fff" /><Gear cx={12} cy={20} r={3} fill="#8fb0e0" hole="#fff" /></g>,
  rLang: <g><ellipse cx="11" cy="10" rx="10" ry="6.500" fill="none" stroke="#8b919b" strokeWidth="3.500" /><text x="9" y="20" fontSize="17" fontWeight="900" fill="#2366b8">R</text></g>,
  python: <g><path d="M11 1c5 0 6 1 6 4v5c0 2-1 3-3 3H9c-2 0-3 1-3 3v2H4c-3 0-3-3-3-6 0-4 1-6 4-6h7V5H6V4c0-2 2-3 5-3z" fill="#3a74a8" /><path d="M13 23c-5 0-6-1-6-4v-4c0-2 1-3 3-3h5c2 0 3-1 3-3V6h2c3 0 3 3 3 6 0 4-1 6-4 6h-7v1h6v1c0 2-2 3-5 3z" fill="#fcd140" /><circle cx="9" cy="3.500" r="1" fill="#fff" /><circle cx="15" cy="20.500" r="1" fill="#fff" /></g>,
  clock: <g fill="#eef3f3" stroke={GREY} strokeWidth="1.500"><circle cx="12" cy="12" r="11" /><path d="M12 4v9l6 3" fill="none" stroke="#777" /></g>,
  report: <g fill="#eee" stroke={GREY}><path d="M4 1h11l5 5v17H4z" /><path d="M7 9h10M7 12h10M7 15h10M7 18h10" strokeWidth="1.500" /></g>,
  editInPlace: <g><path d="M1 2h17v16H5l-4-3z" fill={YELLOW} stroke={GOLD} /><path d="M12 22l1-5 7-11 4 2-7 12z" fill="#f2d26a" stroke="#777" /></g>,
  wrench: <g><path d="M12 12l10 10" stroke="#777" strokeWidth="5" /><path d="M13 13l9 9" stroke="#f4dc80" strokeWidth="3.500" /><path d="M13 13L7 7M3 9c5 4 9-2 5-6" stroke={GREY} strokeWidth="3" fill="none" /></g>,
  gdal: <g><circle cx="15" cy="11" r="9" fill="#5fc0e0" /><path d="M10 5l6-2 4 4-4 4-4-1z" fill="#5a9a4c" /><path d="M2 4l10 3M6 1l3 9M9 7l-3 7" stroke="#222" strokeWidth="2" /><text x="12" y="21" fontSize="9" fontWeight="900" textAnchor="middle">GDAL</text></g>,
  grass: <g fill="#fff" stroke="#666"><path d="M12 5l10 9-10 8-10-8z" fill="#ccc" /><path d="M12 1l10 9-10 9-10-9z" /><path d="M12 17c0-6-3-8-5-8M12 17c0-6 3-9 5-9M12 17V6" fill="none" stroke="#1f9c35" strokeWidth="1.800" /><path d="M4 23h16" /></g>,
  kml: <g><text x="12" y="9" fontSize="10" fontWeight="900" textAnchor="middle" fill="#44546a">KML</text><Plus x={14} y={14} s={9} /></g>,
  lastools: <g><path d="M2 1l8 2 4 6 6 4 2 5H4z" fill="#999" /><path d="M2 1l8 2 2 4-8-1zM6 9l9 2M5 13l14 2" fill="#333" stroke="#eee" /><text x="12" y="23" fontSize="5" fontWeight="700" textAnchor="middle" fill="#555">LAStools</text></g>,
  networks: <g fill="none" strokeWidth="3"><path d="M10 0v5q0 5-5 5H1" stroke="#b9c82c" /><path d="M14 0v5q0 5 5 5h5" stroke="#f28c28" /><path d="M10 24v-5q0-5-5-5H1" stroke="#2f9d94" /><path d="M14 24v-5q0-5 5-5h5" stroke="#5aa6cf" /><path d="M3 3l4 4" stroke="#b9c82c" /><path d="M21 3l-4 4" stroke="#f2641c" /><path d="M3 21l4-4" stroke="#2f9d94" /><path d="M21 21l-4-4" stroke="#5aa6cf" /></g>,
  saga: <g fill="none" stroke="#17568f" strokeWidth="2.600"><path d="M21 5A10.500 10.500 0 1 0 22 14" /><path d="M21 5L5 12l6 6 5-6h7" /></g>,

  search: <g fill="none" stroke="#777" strokeWidth="1.800"><circle cx="9" cy="9" r="7" /><path d="M14 14l8 9" /></g>,
  mouse: <g fill="#fff" stroke="#111" strokeWidth="2"><ellipse cx="8" cy="9" rx="4" ry="8" transform="rotate(-25 8 9)" /><ellipse cx="15" cy="14" rx="4.500" ry="9" transform="rotate(-20 15 14)" /><path d="M10 11l8-3M13 6l3 9M4 5l7 9" fill="none" strokeWidth="1.600" /><path d="M19 5c2-1 1-3 4-3" fill="none" strokeWidth="1" /></g>,
  lock: <g><path d="M6 11V7a6 6 0 0 1 12 0v4" fill="none" stroke="#999" strokeWidth="2.500" /><rect x="3" y="10" width="18" height="13" rx="1.500" fill="#666" /></g>,
  crsGlobe: <g><Globe fill="#c8c8c8" line="#666" r={9.5} cy={11} /><path d="M12 20v3M7 23h10" stroke="#666" strokeWidth="1.500" /></g>,
  messages: <g><path d="M12 2c6 0 11 4 11 9 0 4-3 7-6 8l-1 4-4-3C5 20 1 16 1 11s5-9 11-9z" fill="#666" /><g fill="#fff"><circle cx="7" cy="11" r="1.500" /><circle cx="12" cy="11" r="1.500" /><circle cx="17" cy="11" r="1.500" /></g></g>,
};

const Svg = styled.svg`
  display: block;
  flex: none;
  overflow: visible;
  font-family: ${uiFont};
  ${(props) => props.$faded && "filter: grayscale(0.7) opacity(0.36);"}
`;

const Icon = ({ name, size = 24, faded }) => (
  <Svg width={size} height={size} viewBox="0 0 24 24" $faded={faded} aria-hidden="true">
    {ICONS[name]}
  </Svg>
);

const Caret = ({ color = "#555" }) => (
  <Svg width="9" height="6" viewBox="0 0 9 6" aria-hidden="true">
    <path d="M0 0h9L4.500 6z" fill={color} />
  </Svg>
);

/* ---------- window frame ---------- */

const Window = styled.div`
  position: relative;
  display: flex;
  flex-direction: column;
  height: 100vh;
  overflow: hidden;
`;

const TitleBar = styled.header`
  display: flex;
  align-items: center;
  height: 29px;
  padding: 0 3px 0 2px;
  background: #fff;
  font-family: ${titleFont};
`;

const TitleText = styled.h1`
  flex: 1;
  margin: 0;
  padding-left: 5px;
  font-size: 14px;
  font-weight: 400;
`;

const WindowButton = styled.button`
  display: flex;
  align-items: center;
  justify-content: center;
  width: ${(props) => props.$width || 58}px;
  height: 28px;
  border: 0;
  background: none;
`;

const MenuBar = styled.nav`
  display: flex;
  height: 23px;
  padding-left: 4px;
  border-bottom: 1px solid #d2d2d2;
  background: #efefef;
`;

const MenuItem = styled.button`
  position: relative;
  padding: 0 8px 0 7px;
  border: 0;
  background: none;
  line-height: 22px;
  white-space: nowrap;

  ${(props) =>
    props.$marked &&
    css`
      &::after {
        content: "";
        position: absolute;
        inset: -4px 0 -7px -1px;
        z-index: 2;
        border: 2px solid #fcc800;
        background: #fffc66;
        mix-blend-mode: multiply;
      }
    `}
`;

const Toolbar = styled.div`
  display: flex;
  align-items: center;
  height: ${(props) => (props.$last ? 40 : 39)}px;
  border-bottom: ${(props) => (props.$last ? 2 : 1)}px solid #b6b6b6;
  background: linear-gradient(#fafafa, #ededed);
`;

const Grip = styled.span`
  flex: none;
  width: ${(props) => (props.$first ? 15 : 18)}px;
  height: 20px;
  background: radial-gradient(circle at 1px 1px, #b4b4b4 1px, transparent 1px) 0 0 / 3px 3px;
  background-clip: content-box;
  padding: 0 6px 0 ${(props) => (props.$first ? 6 : 9)}px;
`;

const SideGrip = styled.span`
  flex: none;
  align-self: center;
  width: 18px;
  height: ${(props) => (props.$first ? 13 : 20)}px;
  padding: ${(props) => (props.$first ? 5 : 8)}px 0;
  background: radial-gradient(circle at 1px 1px, #b4b4b4 1px, transparent 1px) 0 0 / 3px 3px;
  background-clip: content-box;
`;

const Divider = styled.span`
  flex: none;
  width: 1px;
  height: ${(props) => props.$height || 24}px;
  margin: 0 3px;
  background: #cfcfcf;
`;

const ToolButton = styled.button`
  display: flex;
  flex: none;
  align-items: center;
  justify-content: center;
  width: ${(props) => props.$width || 33}px;
  height: ${(props) => props.$height || 31}px;
  padding: 0;
  border: 1px solid transparent;
  border-radius: 3px;
  background: none;

  ${(props) =>
    props.$pressed &&
    css`
      border-color: #a8a8a8;
      background: #dcdcdc;
    `}
`;

const MenuButton = styled.button`
  display: flex;
  flex: none;
  align-items: center;
  justify-content: center;
  width: 15px;
  height: 30px;
  padding: 0 4px 0 0;
  border: 0;
  background: none;
`;

const CornerCaret = styled.span`
  z-index: 1;
  align-self: flex-end;
  margin: 0 0 3px -9px;
`;

const Tool = ({ icon, faded, pressed, menu, corner, width, height, size }) => (
  <>
    <ToolButton aria-label={icon} $pressed={pressed} $width={width} $height={height}>
      <Icon name={icon} faded={faded} size={size} />
      {corner && (
        <CornerCaret>
          <Caret color={faded ? "#999" : "#555"} />
        </CornerCaret>
      )}
    </ToolButton>
    {menu && (
      <MenuButton aria-label={`${icon} menu`}>
        <Caret color={faded ? "#999" : "#555"} />
      </MenuButton>
    )}
  </>
);

/* "|" is a grip, "-" a divider; flags follow the icon name:
   x disabled, m drop-down, c corner caret, p pressed */
const Tools = ({ items, ...rest }) =>
  items.map((item, i) => {
    if (item === "|") return <Grip key={i} $first={i === 0} />;
    if (item === "-") return <Divider key={i} $height={rest.size ? 14 : 24} />;
    const [icon, flags = ""] = item.split(":");
    return (
      <Tool
        key={i}
        icon={icon}
        faded={flags.includes("x")}
        menu={flags.includes("m")}
        corner={flags.includes("c")}
        pressed={flags.includes("p")}
        {...rest}
      />
    );
  });

/* ---------- form controls ---------- */

const field = css`
  border: 1px solid #ababab;
  border-radius: 3px;
  background: #fff;
`;

const TextField = styled.input`
  ${field}
  width: ${(props) => props.$width}px;
  height: ${(props) => props.$height || 26}px;
  padding: 0 2px;
  outline: 0;
  text-align: center;
`;

const SpinBox = styled.span`
  ${field}
  display: flex;
  flex: none;
  width: ${(props) => props.$width}px;
  height: ${(props) => props.$height || 26}px;
`;

const SpinInput = styled.input`
  flex: 1;
  min-width: 0;
  padding: 0 4px;
  border: 0;
  background: none;
  outline: 0;
`;

const SpinArrows = styled.span`
  display: flex;
  flex-direction: column;
  width: 16px;
  border-left: 1px solid #c4c4c4;
  border-radius: 0 3px 3px 0;
  background: #f3f3f3;
`;

const SpinArrow = styled.button`
  display: flex;
  flex: 1;
  align-items: center;
  justify-content: center;
  padding: 0;
  border: 0;
  background: none;
`;

const Spin = ({ label, value, width, height, atMin }) => (
  <SpinBox $width={width} $height={height}>
    <SpinInput aria-label={label} defaultValue={value} />
    <SpinArrows>
      <SpinArrow aria-label="+">
        <Svg width="9" height="6" viewBox="0 0 9 6"><path d="M0 6h9L4.500 0z" fill="#555" /></Svg>
      </SpinArrow>
      <SpinArrow aria-label="-">
        <Caret color={atMin ? "#aaa" : "#555"} />
      </SpinArrow>
    </SpinArrows>
  </SpinBox>
);

const ComboBox = styled.span`
  display: grid;
  flex: none;
  align-items: center;
  width: ${(props) => (props.$width ? `${props.$width}px` : "100%")};

  > * {
    grid-area: 1 / 1;
  }
  > svg {
    justify-self: end;
    margin-right: 10px;
    pointer-events: none;
  }
`;

const Select = styled.select`
  ${field}
  width: 100%;
  height: ${(props) => props.$height || 26}px;
  padding: 0 4px;
  appearance: none;
  background: ${(props) => (props.$plain ? "linear-gradient(90deg, #fff 68px, #f1f1f1 68px)" : "linear-gradient(#fdfdfd, #ededed)")};
  outline: 0;
`;

const Combo = ({ id, label, value, width, height, plain }) => (
  <ComboBox $width={width}>
    <Select id={id} aria-label={label} $height={height} $plain={plain}>
      <option>{value}</option>
    </Select>
    <Caret />
  </ComboBox>
);

const CheckBox = styled.input.attrs({ type: "checkbox" })`
  display: grid;
  flex: none;
  place-content: center;
  width: 16px;
  height: 16px;
  margin: 0;
  appearance: none;
  border: 1px solid #b4b4b4;
  background: #fff;

  &:checked::before {
    content: "";
    width: 6px;
    height: 11px;
    margin-top: -3px;
    border: solid #000;
    border-width: 0 2px 2px 0;
    transform: rotate(35deg);
  }
`;

/* ---------- docks ---------- */

const Workspace = styled.div`
  display: flex;
  flex: 1;
  min-height: 0;
`;

const SideBar = styled.div`
  display: flex;
  flex: none;
  flex-direction: column;
  width: 55px;
  border-right: 1px solid #b6b6b6;
  background: linear-gradient(90deg, #fafafa, #ececec);
`;

const SideRow = styled.div`
  display: flex;
  flex: none;
  align-items: center;
  justify-content: center;
  height: ${(props) => props.$height}px;
  padding-left: ${(props) => (props.$menu ? 5 : 0)}px;
  padding-right: ${(props) => (props.$corner ? 12 : 0)}px;
`;

const Dock = styled.aside`
  display: flex;
  flex: none;
  flex-direction: column;
  width: ${(props) => props.$width}px;
  padding: ${(props) => (props.$right ? "0 0 0 7px" : "0 7px 0 0")};
`;

const DockHeader = styled.div`
  display: flex;
  flex: none;
  align-items: center;
  gap: 3px;
  height: 20px;
  padding: 0 2px 0 4px;
`;

const DockTitle = styled.h2`
  flex: 1;
  margin: 0;
  font: 400 14px/20px ${titleFont};
`;

const DockButton = styled.button`
  display: flex;
  align-items: center;
  justify-content: center;
  width: 11px;
  height: 11px;
  padding: 0;
  border: 1px solid #777;
  border-radius: 2px;
  background: none;
`;

const DockTools = styled.div`
  display: flex;
  flex: none;
  align-items: center;
  height: 28px;
  margin-bottom: 2px;
  padding-left: 3px;
`;

const List = styled.ul`
  flex: ${(props) => props.$grow || 1} 1 0;
  min-height: 0;
  margin: 0;
  padding: ${(props) => (props.$padded ? "1px 0 0" : 0)};
  overflow: hidden;
  border: 1px solid #b6b6b6;
  background: #fff;
  list-style: none;
`;

const Splitter = styled.div`
  flex: none;
  align-self: center;
  width: 18px;
  height: 9px;
  padding: 3px 0;
  background: radial-gradient(circle at 1px 1px, #bdbdbd 1px, transparent 1px) 0 0 / 3px 3px;
  background-clip: content-box;
`;

const LayerRow = styled.li`
  display: flex;
  align-items: center;
  height: 20px;
  padding-left: 28px;
  background: ${(props) => (props.$selected ? "#3399ff" : "none")};
`;

const LayerName = styled.label`
  flex: 1;
  padding-left: 3px;
  background: ${(props) => (props.$selected ? "#45a2ff" : "none")};
  color: ${(props) => (props.$selected ? "#fff" : "#000")};
  font-weight: 700;
  line-height: 20px;
  text-decoration: ${(props) => (props.$selected ? "underline" : "none")};
`;

const Swatch = styled.span`
  width: 19px;
  height: 19px;
  margin: 0 3px 0 7px;
  border: 1px solid #3a3a3a;
  background: ${(props) => props.$color};
`;

const TreeRow = styled.li`
  display: flex;
  align-items: center;
  height: 22px;
  padding-left: 10px;
`;

const Twisty = styled.span`
  width: 5px;
  margin-right: 13px;
  border: solid transparent;
  border-width: 4px 0 4px 5px;
  border-left-color: ${(props) => (props.$leaf ? "transparent" : "#555")};
`;

const TreeLabel = styled.span`
  padding-left: 6px;
  white-space: nowrap;
`;

const SearchBox = styled.label`
  ${field}
  display: flex;
  flex: none;
  align-items: center;
  gap: 7px;
  width: ${(props) => (props.$width ? `${props.$width}px` : "auto")};
  height: ${(props) => (props.$width ? 26 : 25)}px;
  margin-bottom: ${(props) => (props.$width ? 0 : 1)}px;
  padding-left: 8px;

  input {
    flex: 1;
    min-width: 0;
    padding: 0;
    border: 0;
    background: none;
    outline: 0;
  }
  input::placeholder {
    color: #777;
    opacity: 1;
  }
`;

const DockTop = ({ title }) => (
  <DockHeader>
    <DockTitle>{title}</DockTitle>
    <DockButton aria-label="float">
      <Svg width="7" height="7" viewBox="0 0 7 7" fill="none" stroke="#555"><path d="M2.500.5h4v4h-4zM2.500 2.500h-2v4h4v-2" /></Svg>
    </DockButton>
    <DockButton aria-label="close">
      <Svg width="7" height="7" viewBox="0 0 7 7" stroke="#444" strokeWidth="1.600"><path d="M.5.5l6 6M6.500.5l-6 6" /></Svg>
    </DockButton>
  </DockHeader>
);

const Tree = ({ rows, grow, padded }) => (
  <List $grow={grow} $padded={padded}>
    {rows.map(([icon, label, leaf]) => (
      <TreeRow key={label}>
        <Twisty $leaf={leaf} />
        <Icon name={icon} size={20} />
        <TreeLabel>{label}</TreeLabel>
      </TreeRow>
    ))}
  </List>
);

/* ---------- map ---------- */

const Canvas = styled.main`
  flex: 1;
  min-width: 0;
  overflow: hidden;
  border: 1px solid #b6b6b6;
  border-top: 0;
  background: #fff;
`;

const MapArrow = styled.svg`
  position: absolute;
  top: 60px;
  left: 908px;
  z-index: 4;
  pointer-events: none;
`;

const Dialog = styled.section`
  position: absolute;
  top: 179px;
  left: 1102px;
  z-index: 3;
  width: 374px;
  border: 1px solid #555;
  background: #efefef;
  font: 13px/16px ${dialogFont};
`;

const DialogTitle = styled.div`
  display: flex;
  align-items: center;
  gap: 5px;
  height: 37px;
  padding-left: 9px;
  background: #fff;
  font-family: ${titleFont};

  h2 {
    flex: 1;
    margin: 0;
    font-size: 14px;
    font-weight: 400;
  }
`;

const DialogBody = styled.form`
  display: flex;
  flex-direction: column;
  padding: 14px 11px 6px 10px;
`;

const DialogLabel = styled.label`
  margin-top: ${(props) => props.$gap || 0}px;
`;

const OutputRow = styled.div`
  display: flex;
  align-items: flex-start;
  gap: 9px;
  padding-right: 2px;
`;

const PathField = styled(TextField)`
  flex: 1;
  min-width: 0;
  padding: 0 3px 0 0;
  text-align: left;
`;

const PushButton = styled.button`
  width: ${(props) => (props.$focus ? 79 : 77)}px;
  height: ${(props) => (props.$focus ? 26 : 25)}px;
  padding: 0;
  border: 1px solid ${(props) => (props.$focus ? "#4f96e8" : "#ababab")};
  border-radius: 3px;
  background: ${(props) => (props.$focus ? "linear-gradient(#fafbfd, #e2e8ef)" : "linear-gradient(#fdfdfd, #ededed)")};
`;

const DialogActions = styled.div`
  display: flex;
  justify-content: center;
  gap: 6px;
  margin-top: 14px;
  padding-left: 8px;
`;

const CloseGlyph = () => (
  <Svg width="12" height="12" viewBox="0 0 12 12" stroke="#000" fill="none">
    <path d="M.5.5l11 11M11.500.5l-11 11" />
  </Svg>
);

const SortDialog = () => {
  const pathRef = useRef(null);

  useEffect(() => {
    pathRef.current.scrollLeft = pathRef.current.scrollWidth;
  }, []);

  return (
    <Dialog role="dialog" aria-label="Sort Attributes">
      <DialogTitle>
        <Icon name="qgis" size={20} />
        <h2>Sort Attributes</h2>
        <WindowButton aria-label="close" $width={42}>
          <CloseGlyph />
        </WindowButton>
      </DialogTitle>
      <DialogBody>
        <DialogLabel htmlFor="source">Source Layer</DialogLabel>
        <Combo id="source" value="origin" height={27} />
        <DialogLabel htmlFor="attribute" $gap={7}>Sort Attribute</DialogLabel>
        <Combo id="attribute" value="area" height={27} />
        <DialogLabel htmlFor="direction" $gap={7}>Direction</DialogLabel>
        <Combo id="direction" value="Descending" height={27} />
        <DialogLabel htmlFor="output" $gap={17}>Output Shapefile</DialogLabel>
        <OutputRow>
          <PathField id="output" ref={pathRef} $height={21} defaultValue="C:/Users/Salvatore/Desktop/butta/origin3.shp" />
          <PushButton type="button" $focus>Browse...</PushButton>
        </OutputRow>
        <DialogActions>
          <PushButton type="button">OK</PushButton>
          <PushButton type="button">Annulla</PushButton>
        </DialogActions>
      </DialogBody>
    </Dialog>
  );
};

/* ---------- status bar ---------- */

const StatusBar = styled.footer`
  display: flex;
  flex: none;
  align-items: center;
  height: 30px;
  padding: 2px 6px 0 4px;
  white-space: nowrap;
`;

const TaskbarEdge = styled.div`
  flex: none;
  height: 2px;
  background: linear-gradient(90deg, #333 507px, #707070 507px, #707070 552px, #333 552px);
`;

const StatusMessage = styled.span`
  flex: 1;
  padding-left: 8px;
`;

const StatusGroup = styled.span`
  display: flex;
  align-items: center;
  gap: ${(props) => props.$gap || 4}px;
  margin-left: ${(props) => props.$before || 0}px;
  margin-right: ${(props) => props.$after || 0}px;
`;

/* ---------- data ---------- */

const menus = [
  ["P", "r", "ogetto"], ["", "M", "odifica"], ["", "V", "isualizza"], ["", "L", "ayer"],
  ["", "I", "mpostazioni"], ["", "P", "lugins"], ["Vett", "o", "re"], ["", "R", "aster"],
  ["", "D", "atabase"], ["", "W", "eb"], ["", "M", "esh"], ["HCMGIS", "", ""],
  ["", "L", "ocation Lab"], ["MMQGIS", "", ""], ["Pro", "c", "essing"], ["", "G", "uida"],
];

const mainTools = [
  "|", "newFile", "open", "save", "layout", "layoutManager", "style",
  "|", "hand:p", "panSelection", "zoomIn", "zoomOut", "zoomNative:x", "zoomFull", "zoomSelection", "zoomLayer",
  "zoomLast", "zoomNext:x", "mapView", "bookmarkNew", "bookmarks", "refresh",
  "|", "identify", "action:xm", "select:m", "selectForm:m", "deselect", "table", "abacus", "gear:p", "sigma",
  "ruler:m", "mapTip", "text:m",
  "|", "help", "|", "mapPin", "|", "qPlugin", "|", "gridPlus", "|", "pentagon",
  "|", "qgsDoc", "xtfDoc", "xtfDoc", "|", "ox", "|", "searchGreen", "brushMap", "|", "www", "|", "|", "plot",
];

const layerTools = [
  "|", "dataSource", "geopackageNew", "shapeNew", "featherNew", "memory", "-", "virtual",
  "|", "edits:xc", "pencil", "saveEdits:x", "addFeature:x", "vertexTool:xm", "multiEdit:x", "copyFeature:x",
  "trash:x", "cut:x", "copy:x", "paste:x", "undo:x", "redo:x",
  "|", "database", "|", "label", "diagram", "labelPin", "labelHold:x", "labelShow:x", "labelMove:x",
  "labelTurn:x", "labelEdit:x", "|", "magnet:p", "snapAll:c", "snapVertex:c",
];

const shapeTools = [
  "topological", "intersection", "tracing:m", "|", "curve:xm", "circle:xm", "ellipse:xm", "rectangle:xm",
  "polygon:xm", "|", "overlap", "|",
];

const editTools = [
  "setSquare", "blobMove:m", "blobTurn", "simplify", "ringAdd", "partAdd", "ringFill", "ringDelete", "partDelete",
  "reshape", "offset", "offsetPoint", "trim", "splitFeature", "splitFeature", "merge", "mergeAttributes",
  "rotateSymbol:m",
];

const browserRows = [
  ["star", "Preferiti"], ["home", "Home"], ["folder", "C:\\"], ["folder", "D:\\"], ["folder", "E:\\"],
  ["folder", "F:\\"], ["geopackage", "GeoPackage"], ["feather", "SpatiaLite"], ["elephant", "PostGIS"],
  ["sail", "MSSQL", true], ["db2", "DB2", true], ["earth", "WMS/WMTS"], ["earth", "XYZ Tiles"], ["wcs", "WCS"],
  ["wfs", "WFS"], ["ows", "OWS"], ["arcMap", "ArcGisMapServer"], ["arcFeature", "ArcGisFeatureServer"],
  ["geonode", "GeoNode"],
];

const processingRows = [
  ["clock", "Usati di recente"],
  ...[
    "Analisi di reti", "Analisi geomorfologica", "Analisi raster", "Analisi vettore", "Cartografia",
    "Creazione vettore", "Database", "Generale vettore", "Geometria vettore", "Grafici", "Interpolazione",
    "Selezione vettore", "Sovrapposizione vettore", "Strumenti file", "Strumenti Layer", "Strumenti raster",
    "Tabella vettore",
  ].map((label) => ["qgis", label]),
  ["gear", "Climb"], ["plot", "DataPlotly"], ["gdal", "GDAL"], ["grass", "GRASS"], ["kml", "KML tools"],
  ["lastools", "LAStools"], ["models", "Modelli"], ["networks", "Networks"], ["threejs", "Qgis2threejs"],
  ["rLang", "R"], ["saga", "SAGA"], ["python", "Script"],
];

const SideTool = ({ item, height, faded }) => {
  const [icon, flag] = item.split(":");
  return (
    <SideRow $height={height} $menu={flag === "m"} $corner={flag === "c"}>
      <Tool icon={icon} faded={faded} menu={flag === "m"} corner={flag === "c"} height={height} />
    </SideRow>
  );
};

const App = () => (
  <Window>
    <GlobalStyle />
    <TitleBar>
      <Icon name="qgis" size={20} />
      <TitleText>*Progetto Senza Titolo - QGIS</TitleText>
      <WindowButton aria-label="minimise">
        <Svg width="12" height="12" viewBox="0 0 12 12" stroke="#000"><path d="M0 5.500h12" /></Svg>
      </WindowButton>
      <WindowButton aria-label="restore">
        <Svg width="12" height="12" viewBox="0 0 12 12" stroke="#000" fill="none"><path d="M.5 3.500h8v8h-8zM3.500 3.500v-3h8v8h-3" /></Svg>
      </WindowButton>
      <WindowButton aria-label="close">
        <CloseGlyph />
      </WindowButton>
    </TitleBar>

    <MenuBar>
      {menus.map(([before, key, after]) => (
        <MenuItem key={before + key + after} $marked={before === "MMQGIS"}>
          {before}
          {key && <u>{key}</u>}
          {after}
        </MenuItem>
      ))}
    </MenuBar>
    <Toolbar>
      <Tools items={mainTools} />
    </Toolbar>
    <Toolbar $last>
      <Tools items={layerTools} />
      <StatusGroup $before={1} $gap={2} $after={2}>
        <Spin label="tolerance" value="0,00000" width={121} height={24} atMin />
        <Combo label="unit" value="metri" width={64} height={25} />
      </StatusGroup>
      <Tools items={shapeTools} />
    </Toolbar>

    <Workspace>
      <SideBar>
        <SideGrip $first />
        {editTools.map((item, i) => (
          <SideTool key={i} item={item} height={32} faded />
        ))}
        <SideGrip />
        {["crosshair", "topology", "tableRefresh"].map((item) => (
          <SideTool key={item} item={item} height={31} />
        ))}
        <SideGrip />
        {["threejs", "globeAdd:c", "globeSearch", "globeFind"].map((item) => (
          <SideTool key={item} item={item} height={32} />
        ))}
      </SideBar>

      <Dock $width={244}>
        <DockTop title="Layer" />
        <DockTools>
          <Tools
            items={["brush", "addGroup", "eye", "filter", "epsilon:m", "expand", "collapse", "removeLayer"]}
            width={25}
            height={24}
            size={16}
          />
        </DockTools>
        <List $grow={332}>
          <LayerRow $selected>
            <CheckBox id="origin3" defaultChecked />
            <Swatch $color="#b07c7f" />
            <LayerName htmlFor="origin3" $selected>origin3.shp origin3</LayerName>
          </LayerRow>
          <LayerRow>
            <CheckBox id="origin" defaultChecked />
            <Swatch $color="#709a6c" />
            <LayerName htmlFor="origin">origin</LayerName>
          </LayerRow>
        </List>
        <Splitter />
        <DockTop title="Browser" />
        <DockTools>
          <Tools items={["addLayer", "refresh", "filter", "collapse", "info"]} width={25} height={24} size={16} />
        </DockTools>
        <Tree rows={browserRows} grow={475} padded />
      </Dock>

      <Canvas>
        <svg width="1329" height="916" viewBox="300 131 1329 916">
          <g fill="#e77148" stroke="#232323">
            <rect x="492.500" y="235.500" width="837" height="711" />
            <rect x="577.500" y="257.500" width="168" height="181" />
            <rect x="988.500" y="644.500" width="305" height="248" />
            <rect x="1077.500" y="743.500" width="174" height="131" />
          </g>
        </svg>
      </Canvas>

      <Dock $width={290} $right>
        <DockTop title="Strumenti di Processing" />
        <DockTools>
          <Tools
            items={["js:c", "models:c", "rLang:c", "python:c", "clock", "report", "-", "editInPlace", "-", "wrench"]}
            width={25}
            height={24}
            size={17}
          />
        </DockTools>
        <SearchBox>
          <Icon name="search" size={13} />
          <input aria-label="Cerca" placeholder="Cerca..." />
        </SearchBox>
        <Tree rows={processingRows} />
      </Dock>
    </Workspace>

    <StatusBar>
      <SearchBox $width={309}>
        <Icon name="search" size={13} />
        <input aria-label="Digita per localizzare" placeholder="Digita per localizzare (Ctrl+K)" />
      </SearchBox>
      <StatusMessage>Sorted shapefile created from origin</StatusMessage>
      <StatusGroup>
        <label htmlFor="coordinate">Coordinate</label>
        <TextField id="coordinate" $width={90} defaultValue="-1.742,1.257" />
        <Icon name="mouse" size={20} />
      </StatusGroup>
      <StatusGroup $before={12}>
        <label htmlFor="scale">Scala</label>
        <Combo id="scale" value="1:673562" width={91} plain />
      </StatusGroup>
      <StatusGroup $before={11} $gap={7}>
        <Icon name="lock" size={20} />
        <span>Lente d'ingrandimento</span>
        <Spin label="Lente d'ingrandimento" value="100%" width={92} />
      </StatusGroup>
      <StatusGroup $before={9} $gap={8}>
        <span>Rotazione</span>
        <Spin label="Rotazione" value="0,0 °" width={88} />
      </StatusGroup>
      <StatusGroup $before={8} $gap={7}>
        <CheckBox id="render" defaultChecked />
        <label htmlFor="render">Visualizza</label>
      </StatusGroup>
      <StatusGroup $before={17}>
        <Icon name="crsGlobe" size={20} />
        <span>EPSG:4326</span>
      </StatusGroup>
      <StatusGroup $before={13}>
        <Icon name="messages" size={21} />
      </StatusGroup>
    </StatusBar>
    <TaskbarEdge />

    <MapArrow width="192" height="134" viewBox="908 60 192 134">
      <path d="M915 66l168 115" stroke="#000" strokeWidth="2" />
      <path d="M1096 190l-17-3 10-14z" />
    </MapArrow>
    <SortDialog />
  </Window>
);

export default App;
